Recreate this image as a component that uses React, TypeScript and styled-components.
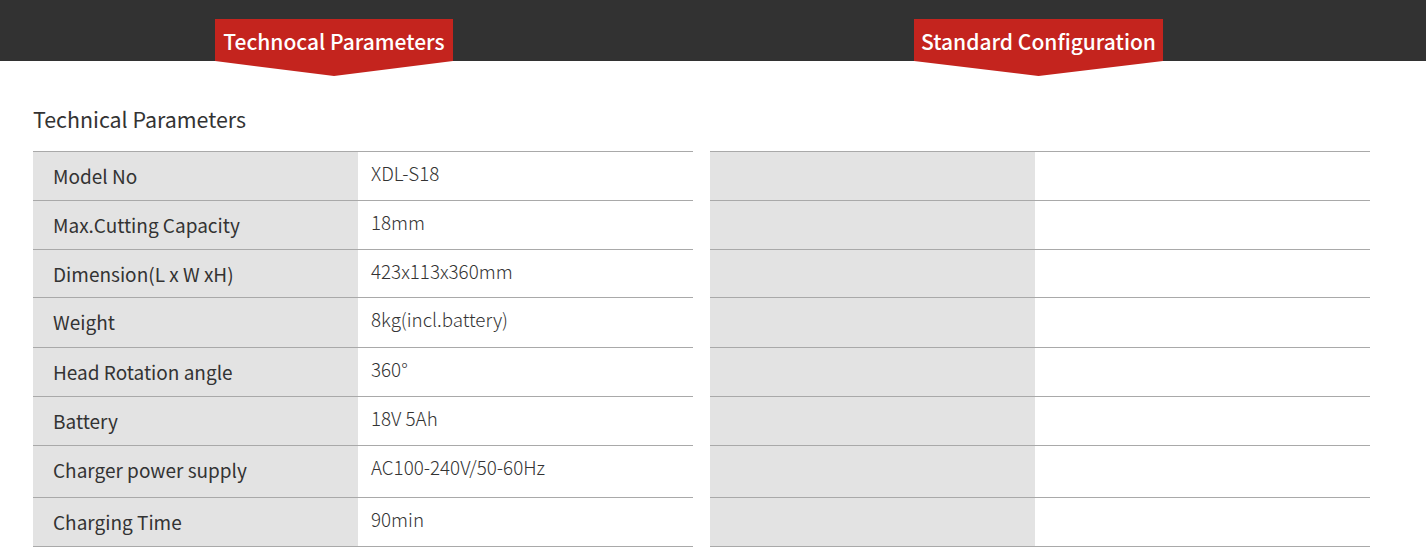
import React from "react";
import styled, { createGlobalStyle } from "styled-components";

const GlobalStyle = createGlobalStyle`
  html, body { margin: 0; padding: 0; background: #ffffff; }
  body { font-family: "Noto Sans CJK SC", "Noto Sans", sans-serif; }
  * { box-sizing: border-box; }
`;

const Page = styled.div`
  width: 1426px;
  height: 547px;
  overflow: hidden;
  background: #ffffff;
`;

const TopBar = styled.div`
  height: 61px;
  background: #323232;
  display: flex;
  align-items: flex-start;
  padding: 19px 0 0 215px;
  gap: 461px;
`;

const Tab = styled.div<{ $w: number }>`
  position: relative;
  width: ${(p) => p.$w}px;
  height: 57px;
  background: #c4241e;
  clip-path: polygon(0 0, 100% 0, 100% 42px, 50% 100%, 0 42px);
  color: #ffffff;
  font-size: 21px;
  font-weight: 500;
  line-height: 1;
  display: flex;
  justify-content: center;
  padding-top: 12px;
  white-space: nowrap;
  z-index: 1;
`;

const Content = styled.div`
  padding: 44px 0 0 33px;
`;

const Title = styled.h2`
  margin: 0 0 18px 0;
  font-size: 21.4px;
  font-weight: 400;
  color: #333333;
  line-height: 28px;
  height: 28px;
`;

const Tables = styled.div`
  display: flex;
  gap: 17px;
`;

const Table = styled.div`
  width: 660px;
  border-top: 1px solid #a9a9a9;
`;

const Row = styled.div<{ $h: number }>`
  display: grid;
  grid-template-columns: 325px 1fr;
  height: ${(p) => p.$h}px;
  border-bottom: 1px solid #a9a9a9;
`;

const Label = styled.div`
  background: #e3e3e3;
  color: #333333;
  font-size: 19px;
  font-weight: 400;
  padding: 12px 0 0 20px;
  line-height: 24px;
  white-space: nowrap;
`;

const Value = styled.div`
  background: #ffffff;
  color: #333333;
  font-size: 18.8px;
  font-weight: 300;
  padding: 9px 0 0 13px;
  line-height: 24px;
  white-space: nowrap;
`;

const rows: [string, string][] = [
  ["Model No", "XDL-S18"],
  ["Max.Cutting Capacity", "18mm"],
  ["Dimension(L x W xH)", "423x113x360mm"],
  ["Weight", "8kg(incl.battery)"],
  ["Head Rotation angle", "360°"],
  ["Battery", "18V 5Ah"],
  ["Charger power supply", "AC100-240V/50-60Hz"],
  ["Charging Time", "90min"],
];

const heights = [48, 48, 47, 49, 48, 48, 51, 48];

export default function App() {
  return (
    <Page>
      <GlobalStyle />
      <TopBar>
        <Tab $w={238}>Technocal Parameters</Tab>
        <Tab $w={249}>Standard Configuration</Tab>
      </TopBar>
      <Content>
        <Title>Technical Parameters</Title>
        <Tables>
          <Table>
            {rows.map(([l, v], i) => (
              <Row key={l} $h={heights[i] + 1}>
                <Label>{l}</Label>
                <Value>{v}</Value>
              </Row>
            ))}
          </Table>
          <Table>
            {rows.map(([l], i) => (
              <Row key={l} $h={heights[i] + 1}>
                <Label />
                <Value />
              </Row>
            ))}
          </Table>
        </Tables>
      </Content>
    </Page>
  );
}
